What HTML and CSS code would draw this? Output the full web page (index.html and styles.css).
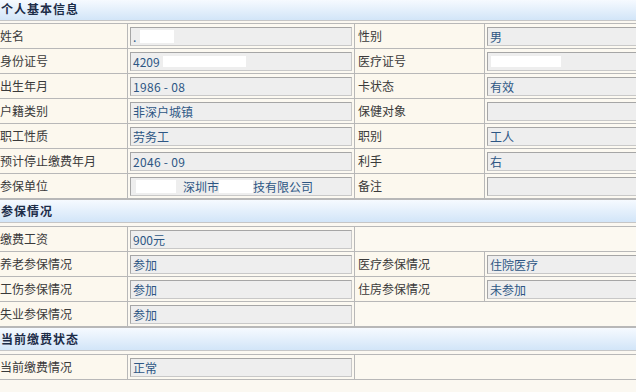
FILE: index.html
```html
<!DOCTYPE html>
<html lang="zh-CN">
<head>
<meta charset="utf-8">
<title>个人基本信息</title>
<link rel="stylesheet" href="styles.css">
</head>
<body>
<div class="page">
  <section class="sec first">
    <div class="sec-title">个人基本信息</div>
    <div class="grid">
      <div class="lab l1">姓名</div>
      <div class="val"><div class="box"><span class="dot">.</span><span class="mask m-name"></span></div></div>
      <div class="lab">性别</div>
      <div class="val"><div class="box">男</div></div>

      <div class="lab l1">身份证号</div>
      <div class="val"><div class="box">4209<span class="mask m-id"></span></div></div>
      <div class="lab">医疗证号</div>
      <div class="val"><div class="box"><span class="mask m-med"></span></div></div>

      <div class="lab l1">出生年月</div>
      <div class="val"><div class="box pre">1986 - 08</div></div>
      <div class="lab">卡状态</div>
      <div class="val"><div class="box">有效</div></div>

      <div class="lab l1">户籍类别</div>
      <div class="val"><div class="box">非深户城镇</div></div>
      <div class="lab">保健对象</div>
      <div class="val"><div class="box"></div></div>

      <div class="lab l1">职工性质</div>
      <div class="val"><div class="box">劳务工</div></div>
      <div class="lab">职别</div>
      <div class="val"><div class="box">工人</div></div>

      <div class="lab l1">预计停止缴费年月</div>
      <div class="val"><div class="box pre">2046 - 09</div></div>
      <div class="lab">利手</div>
      <div class="val"><div class="box">右</div></div>

      <div class="lab l1">参保单位</div>
      <div class="val"><div class="box"><span class="mask m-co1"></span>深圳市<span class="mask m-co2"></span>技有限公司</div></div>
      <div class="lab">备注</div>
      <div class="val"><div class="box"></div></div>
    </div>
  </section>

  <section class="sec">
    <div class="sec-title">参保情况</div>
    <div class="grid">
      <div class="lab l1">缴费工资</div>
      <div class="val"><div class="box">900元</div></div>
      <div class="blank"></div>

      <div class="lab l1">养老参保情况</div>
      <div class="val"><div class="box">参加</div></div>
      <div class="lab">医疗参保情况</div>
      <div class="val"><div class="box">住院医疗</div></div>

      <div class="lab l1">工伤参保情况</div>
      <div class="val"><div class="box">参加</div></div>
      <div class="lab">住房参保情况</div>
      <div class="val"><div class="box">未参加</div></div>

      <div class="lab l1">失业参保情况</div>
      <div class="val"><div class="box">参加</div></div>
      <div class="blank"></div>
    </div>
  </section>

  <section class="sec">
    <div class="sec-title">当前缴费状态</div>
    <div class="grid">
      <div class="lab l1">当前缴费情况</div>
      <div class="val"><div class="box">正常</div></div>
      <div class="blank"></div>
    </div>
  </section>
</div>
</body>
</html>
```

FILE: styles.css
```css
html, body {
  margin: 0;
  padding: 0;
}
body {
  width: 636px;
  height: 392px;
  overflow: hidden;
  background: #fbf8f1;
  font-family: "Noto Sans CJK SC", "Liberation Sans", sans-serif;
  font-size: 12px;
  color: #3a3a3a;
}
.page {
  width: 636px;
  overflow: hidden;
}
.sec {
  display: flex;
  flex-direction: column;
}
.sec-title {
  height: 22px;
  line-height: 22px;
  padding-left: 1px;
  font-weight: bold;
  font-size: 12px;
  letter-spacing: 1px;
  color: #1c2c48;
  background: linear-gradient(#f6faff, #d2e5f8);
  border-top: 1px solid #b8b8b8;
  border-bottom: 1px solid #c6c6c6;
  margin-bottom: 3px;
}
.sec.first .sec-title {
  height: 20px;
  line-height: 18px;
  border-top: none;
  margin-bottom: 2px;
}
.grid {
  display: grid;
  grid-template-columns: 128px 227px 130px 275px;
  grid-auto-rows: 25px;
  width: 760px;
  border-top: 1px solid #b8b8b8;
}
.lab, .val, .blank {
  border-bottom: 1px solid #b8b8b8;
  border-right: 1px solid #b8b8b8;
  box-sizing: border-box;
}
.lab {
  background: #fcf8ee;
  padding-left: 3px;
  line-height: 24px;
  white-space: nowrap;
}
.lab.l1 {
  padding-left: 0;
}
.blank {
  grid-column: 3 / 5;
  background: #fcf9f1;
}
.val {
  background: #fcf9f1;
  padding: 3px 2px 2px 2px;
}
.box {
  height: 19px;
  box-sizing: border-box;
  border: 1px solid #a6a6a6;
  border-right-color: #c8c8c8;
  border-bottom-color: #c8c8c8;
  background: #eeeeee;
  color: #2d5684;
  padding-left: 2px;
  line-height: 17px;
  white-space: nowrap;
  display: flex;
  align-items: center;
}
.box.pre {
  white-space: pre;
  letter-spacing: 0.3px;
}
.mask {
  display: inline-block;
  background: #ffffff;
  height: 13px;
}
.dot {
  width: 6px;
}
.m-name { width: 34px; margin-left: 1px; }
.m-id { width: 83px; margin-left: 3px; height: 11px; }
.m-med { width: 70px; height: 11px; margin-left: 1px; }
.m-co1 { width: 40px; margin-left: 3px; margin-right: 7px; }
.m-co2 { width: 34px; }
```
